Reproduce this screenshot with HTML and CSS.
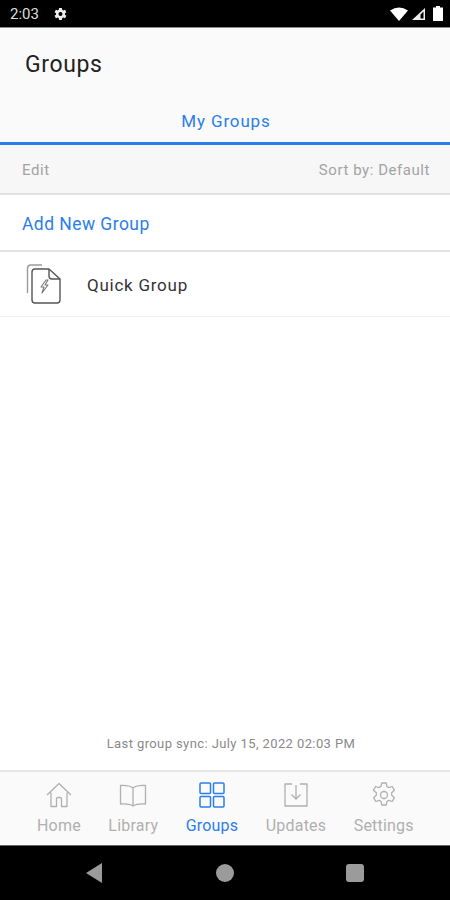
FILE: index.html
```html
<!DOCTYPE html>
<html>
<head>
    <title>Groups</title>
    <link rel="stylesheet" href="styles.css">
</head>
<body>
    <div class="phone">
        <div class="status-bar">
            <span class="clock">2:03</span>
            <svg class="status-gear" width="16" height="16" viewBox="0 0 24 24"><path fill="#eee" fill-rule="evenodd" d="M19.4 13a7.500 7.500 0 0 0 0-2l2.200-1.700-2.100-3.600-2.600 1a7.500 7.500 0 0 0-1.700-1L14.800 3h-4.200l-.4 2.700a7.500 7.500 0 0 0-1.700 1l-2.600-1-2.100 3.600L6 11a7.500 7.500 0 0 0 0 2l-2.200 1.700 2.100 3.600 2.600-1a7.500 7.500 0 0 0 1.700 1l.4 2.700h4.200l.4-2.700a7.500 7.500 0 0 0 1.700-1l2.600 1 2.100-3.600zM12.700 15a3 3 0 1 1 0-6 3 3 0 0 1 0 6z"/></svg>
            <span class="status-right">
                <svg width="18" height="14" viewBox="0 0 18 14"><path fill="#fff" d="M0 3.500Q9-2.500 18 3.500L9 14z"/></svg>
                <svg width="15" height="14" viewBox="0 0 15 14"><path fill="#eee" fill-rule="evenodd" d="M14 1v12H1zM12.500 4.500 9.500 7.500v4h3z"/></svg>
                <svg class="battery" width="10" height="15" viewBox="0 0 10 15"><path fill="#fff" d="M3 0h4v1.500h3V15H0V1.500h3z"/></svg>
            </span>
        </div>

        <div class="header">
            <div class="title">Groups</div>
            <div class="tab">My Groups</div>
        </div>

        <div class="toolbar">
            <span>Edit</span>
            <span>Sort by: Default</span>
        </div>

        <div class="add-row">Add New Group</div>

        <div class="group-row">
            <svg class="group-icon" width="40" height="44" viewBox="0 0 40 44" fill="none">
                <path stroke="#9a9a9a" stroke-width="1.400" d="M2.500 31V6.500Q2.500 3 6 3h11"/>
                <path stroke="#555" stroke-width="1.400" stroke-linejoin="round" d="M7 10q0-3 3-3h14l11 10v21q0 3-3 3H10q-3 0-3-3z"/>
                <path stroke="#555" stroke-width="1.400" stroke-linejoin="round" d="M24 7v7q0 3 3 3h8"/>
                <path stroke="#777" stroke-width="1.100" stroke-linejoin="round" d="M21 18l-5 7h3l-2 6 6-8h-3l3-5z"/>
            </svg>
            <span class="group-name">Quick Group</span>
        </div>

        <div class="content">
            <div class="sync">Last group sync: July 15, 2022 02:03 PM</div>
        </div>

        <div class="tabbar">
            <div class="tab-item">
                <svg width="28" height="28" viewBox="0 0 28 28" fill="none" stroke="currentColor" stroke-width="1.300" stroke-linejoin="round"><path d="M2 14 14 2.500 26 14M6 11.500V25.500h5.500V18q0-1.500 1.500-1.500h2q1.500 0 1.500 1.500v7.500H22V11.500"/></svg>
                <span>Home</span>
            </div>
            <div class="tab-item">
                <svg width="28" height="28" viewBox="0 0 28 28" fill="none" stroke="currentColor" stroke-width="1.300" stroke-linejoin="round"><path d="M14 7Q10 4 1.500 4.500V23Q10 22.500 14 25 18 22.500 26.500 23V4.500Q18 4 14 7zV25"/></svg>
                <span>Library</span>
            </div>
            <div class="tab-item active">
                <svg width="28" height="28" viewBox="0 0 28 28" fill="none" stroke="currentColor" stroke-width="1.500"><rect x="2" y="2" width="10.500" height="10.500" rx="1"/><rect x="15.500" y="2" width="10.500" height="10.500" rx="1"/><rect x="2" y="15.500" width="10.500" height="10.500" rx="1"/><rect x="15.500" y="15.500" width="10.500" height="10.500" rx="1"/></svg>
                <span>Groups</span>
            </div>
            <div class="tab-item">
                <svg width="28" height="28" viewBox="0 0 28 28" fill="none" stroke="currentColor" stroke-width="1.300" stroke-linejoin="round"><path d="M10 3H3v22h22V3h-7M14 4v14M9.500 13.500 14 18l4.500-4.500"/></svg>
                <span>Updates</span>
            </div>
            <div class="tab-item">
                <svg width="28" height="28" viewBox="0 0 28 28" fill="none" stroke="currentColor" stroke-width="1.300" stroke-linejoin="round"><circle cx="14" cy="14" r="3.500"/><path d="M11.800 2h4.400l.7 3.500 1.900 1.100 3.400-1.100 2.200 3.800-2.700 2.400v2.600l2.700 2.400-2.200 3.800-3.400-1.100-1.900 1.100-.7 3.500h-4.400l-.7-3.500-1.900-1.100-3.400 1.100-2.200-3.800 2.700-2.400v-2.600L3.400 9.300l2.200-3.800 3.400 1.100 1.900-1.100z"/></svg>
                <span>Settings</span>
            </div>
        </div>

        <div class="nav-bar">
            <svg width="16" height="20" viewBox="0 0 16 20"><path fill="#9b9b9b" d="M16 0v20L0 10z"/></svg>
            <span class="nav-home"></span>
            <span class="nav-square"></span>
        </div>
    </div>
</body>
</html>
```

FILE: styles.css
```css
html, body {
    margin: 0;
    padding: 0;
}

body {
    font-family: Roboto, "Noto Sans", sans-serif;
    background-color: #fff;
}

.phone {
    display: flex;
    flex-direction: column;
    width: 450px;
    height: 900px;
    overflow: hidden;
}

.status-bar {
    display: flex;
    align-items: center;
    flex: none;
    height: 27px;
    padding: 0 7px 0 10px;
    background-color: #000;
    border-bottom: 1px solid #888;
    color: #ddd;
}

.clock {
    font-size: 15px;
    margin-right: 13px;
}

.status-right {
    display: flex;
    align-items: center;
    gap: 3px;
    margin-left: auto;
}

.battery {
    margin-left: 4px;
}

.header {
    flex: none;
    height: 114px;
    background-color: #fafafa;
    border-bottom: 3px solid #2b7de9;
}

.title {
    padding: 23px 0 0 25px;
    font-size: 23px;
    line-height: 28px;
    letter-spacing: 0.6px;
    color: #222;
}

.tab {
    margin-top: 31px;
    padding-left: 2px;
    text-align: center;
    font-size: 17px;
    line-height: 22px;
    letter-spacing: 0.85px;
    color: #2b7de9;
}

.toolbar {
    display: flex;
    justify-content: space-between;
    align-items: center;
    flex: none;
    height: 46px;
    padding: 2px 20px 0 22px;
    background-color: #f7f7f7;
    border-bottom: 2px solid #e2e2e2;
    font-size: 15px;
    letter-spacing: 0.55px;
    color: #a3a3a3;
}

.add-row {
    flex: none;
    height: 54px;
    line-height: 56px;
    padding: 1px 0 0 22px;
    border-bottom: 2px solid #e2e2e2;
    font-size: 17.500px;
    letter-spacing: 0.45px;
    color: #2b7de9;
}

.group-row {
    display: flex;
    align-items: center;
    flex: none;
    height: 64px;
    padding-left: 25px;
    border-bottom: 1px solid #f2f2f2;
}

.group-icon {
    flex: none;
}

.group-name {
    margin-left: 22px;
    padding-top: 2px;
    font-size: 17px;
    letter-spacing: 0.75px;
    color: #333;
}

.content {
    display: flex;
    flex: 1;
    align-items: flex-end;
    justify-content: center;
    padding-bottom: 19px;
    padding-left: 12px;
}

.sync {
    font-size: 13px;
    letter-spacing: 0.4px;
    color: #8a8a8a;
}

.tabbar {
    display: flex;
    flex: none;
    gap: 27.500px;
    height: 73px;
    padding-left: 37px;
    background-color: #fafafa;
    border-top: 2px solid #e6e6e6;
    border-bottom: 1px solid #666;
}

.tab-item {
    display: flex;
    flex-direction: column;
    align-items: center;
    padding-top: 9px;
    font-size: 16px;
    letter-spacing: 0.2px;
    color: #b0b0b0;
}

.tab-item span {
    margin-top: 7px;
}

.tab-item.active {
    color: #2b7de9;
}

.nav-bar {
    display: flex;
    align-items: center;
    flex: none;
    height: 54px;
    padding-left: 86px;
    background-color: #000;
}

.nav-home {
    width: 18px;
    height: 18px;
    margin-left: 114px;
    border-radius: 50%;
    background-color: #9b9b9b;
}

.nav-square {
    width: 18px;
    height: 18px;
    margin-left: 112px;
    border-radius: 3px;
    background-color: #9b9b9b;
}
```
